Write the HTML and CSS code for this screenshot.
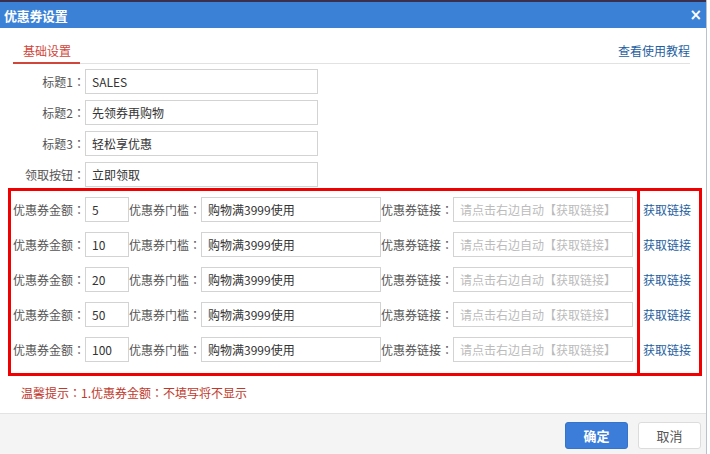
FILE: index.html
```html
<!DOCTYPE html>
<html lang="zh-CN">
<head>
<meta charset="utf-8">
<title>优惠券设置</title>
<link rel="stylesheet" href="styles.css">
</head>
<body>
<div class="dialog">
  <div class="titlebar">
    <span class="title">优惠券设置</span>
    <span class="close">×</span>
  </div>
  <div class="content">
    <div class="tabs">
      <span class="tab active">基础设置</span>
      <a class="help">查看使用教程</a>
    </div>
    <div class="form">
      <label class="lbl">标题1：</label><div class="input">SALES</div>
      <label class="lbl">标题2：</label><div class="input">先领券再购物</div>
      <label class="lbl">标题3：</label><div class="input">轻松享优惠</div>
      <label class="lbl">领取按钮：</label><div class="input">立即领取</div>
    </div>
    <div class="coupons">
      <div class="coupon-fields">
        <div class="crow"><span class="clbl">优惠券金额：</span><div class="input amt">5</div><span class="clbl">优惠券门槛：</span><div class="input wide">购物满3999使用</div><span class="clbl">优惠券链接：</span><div class="input wide ph">请点击右边自动【获取链接】</div></div>
        <div class="crow"><span class="clbl">优惠券金额：</span><div class="input amt">10</div><span class="clbl">优惠券门槛：</span><div class="input wide">购物满3999使用</div><span class="clbl">优惠券链接：</span><div class="input wide ph">请点击右边自动【获取链接】</div></div>
        <div class="crow"><span class="clbl">优惠券金额：</span><div class="input amt">20</div><span class="clbl">优惠券门槛：</span><div class="input wide">购物满3999使用</div><span class="clbl">优惠券链接：</span><div class="input wide ph">请点击右边自动【获取链接】</div></div>
        <div class="crow"><span class="clbl">优惠券金额：</span><div class="input amt">50</div><span class="clbl">优惠券门槛：</span><div class="input wide">购物满3999使用</div><span class="clbl">优惠券链接：</span><div class="input wide ph">请点击右边自动【获取链接】</div></div>
        <div class="crow"><span class="clbl">优惠券金额：</span><div class="input amt">100</div><span class="clbl">优惠券门槛：</span><div class="input wide">购物满3999使用</div><span class="clbl">优惠券链接：</span><div class="input wide ph">请点击右边自动【获取链接】</div></div>
      </div>
      <div class="coupon-links">
        <a class="getlink">获取链接</a>
        <a class="getlink">获取链接</a>
        <a class="getlink">获取链接</a>
        <a class="getlink">获取链接</a>
        <a class="getlink">获取链接</a>
      </div>
    </div>
    <p class="tip">温馨提示：1.优惠券金额：不填写将不显示</p>
  </div>
  <div class="footer">
    <button class="btn primary">确定</button>
    <button class="btn">取消</button>
  </div>
</div>
</body>
</html>
```
FILE: styles.css
```css
html, body {
  margin: 0;
  padding: 0;
  background: #ffffff;
}
body {
  font-family: "Noto Sans CJK SC", "Liberation Sans", sans-serif;
  font-size: 12px;
  color: #555;
}
.dialog {
  width: 706px;
  height: 454px;
  border-right: 1px solid #b9c3d0;
  display: flex;
  flex-direction: column;
  background: #fff;
}
.titlebar {
  height: 26px;
  border-top: 2px solid #3a2f4c;
  background: #3b82d6;
  display: flex;
  align-items: center;
  justify-content: space-between;
  padding: 0 4px 0 4px;
  color: #fff;
}
.title {
  font-weight: bold;
  font-size: 13px;
  letter-spacing: -0.3px;
}
.close {
  font-weight: bold;
  font-size: 15px;
  line-height: 1;
  font-family: "DejaVu Sans", sans-serif;
}
.content {
  flex: 1;
  display: flex;
  flex-direction: column;
}
.tabs {
  margin: 12px 16px 0 13px;
  height: 23px;
  border-bottom: 1px solid #e2e2e2;
  display: flex;
  justify-content: space-between;
  align-items: flex-start;
}
.tab {
  line-height: 22px;
  padding: 0 9px 0 10px;
  color: #d0463a;
  border-bottom: 2px solid #d0463a;
  margin-bottom: -1px;
}
.help {
  line-height: 22px;
  color: #1f5f9f;
}
.form {
  margin-top: 5px;
  display: grid;
  grid-template-columns: 85px 233px;
  row-gap: 6px;
}
.lbl {
  text-align: right;
  line-height: 25px;
  color: #555;
  font-family: "Noto Sans CJK JP", "Noto Sans CJK SC", sans-serif;
  font-feature-settings: "locl" 0;
}
.input {
  box-sizing: border-box;
  height: 25px;
  border: 1px solid #d3d3d3;
  padding: 0 6px;
  line-height: 23px;
  color: #333;
  white-space: nowrap;
  overflow: hidden;
  background: #fff;
}
.coupons {
  margin: 1px 0 0 8px;
  width: 694px;
  box-sizing: border-box;
  border: 3px solid #f00000;
  display: flex;
}
.coupon-fields {
  width: 626px;
  padding: 6px 0 11px 2px;
  box-sizing: border-box;
  display: flex;
  flex-direction: column;
  gap: 10px;
}
.crow {
  display: flex;
  height: 25px;
}
.clbl {
  width: 72px;
  line-height: 25px;
  color: #555;
  white-space: nowrap;
  font-family: "Noto Sans CJK JP", "Noto Sans CJK SC", sans-serif;
  font-feature-settings: "locl" 0;
}
.amt {
  width: 44px;
}
.wide {
  width: 180px;
}
.ph {
  color: #bbb;
}
.coupon-links {
  flex: 1;
  border-left: 3px solid #f00000;
  padding: 6px 0 0 3px;
  display: flex;
  flex-direction: column;
  gap: 10px;
}
.getlink {
  line-height: 25px;
  height: 25px;
  color: #1f5f9f;
}
.tip {
  margin: 7px 0 0 21px;
  line-height: 20px;
  color: #c0392b;
  font-family: "Noto Sans CJK JP", "Noto Sans CJK SC", sans-serif;
  font-feature-settings: "locl" 0;
}
.footer {
  height: 41px;
  border-top: 1px solid #e3e3e3;
  background: #f4f4f4;
  display: flex;
  justify-content: flex-end;
  align-items: flex-start;
  gap: 10px;
  padding: 8px 5px 0 0;
  box-sizing: border-box;
}
.btn {
  width: 63px;
  height: 27px;
  border: 1px solid #dcdcdc;
  border-radius: 3px;
  background: #fff;
  color: #555;
  font-family: "Noto Sans CJK SC", sans-serif;
  font-size: 13px;
  padding: 0;
}
.btn.primary {
  background: #3b7dd8;
  border-color: #3574cc;
  color: #fff;
  font-weight: bold;
}
```
